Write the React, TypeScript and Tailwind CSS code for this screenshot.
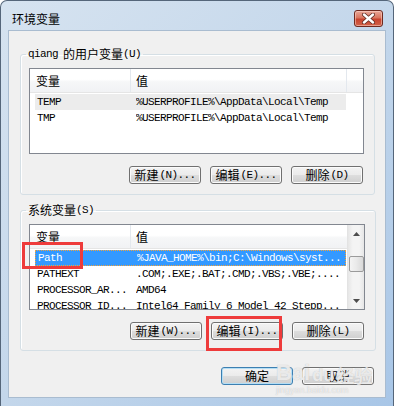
import React from 'react';

const mono = "font-['Liberation_Mono',monospace] text-[11px] tracking-[-0.6px]";

type Row = { name: string; value: string; state?: 'focus' | 'gray' };

function Button({ zh, hint, isDefault }: { zh: string; hint?: string; isDefault?: boolean }) {
  return (
    <div
      className={
        'w-[72px] h-[18px] rounded-[3px] border flex items-center justify-center leading-none bg-[linear-gradient(#f3f3f3_0%,#ebebeb_48%,#dddddd_52%,#cfcfcf_100%)] ' +
        (isDefault
          ? 'border-[#3c7fb1] shadow-[inset_0_0_0_1px_#b4def5]'
          : 'border-[#707070] shadow-[inset_0_0_0_1px_#fbfbfb]')
      }
    >
      <span className="text-[12px]">{zh}</span>
      {hint && <span className={mono + ' ml-[1px]'}>{hint}</span>}
    </div>
  );
}

function Header({ filler }: { filler: boolean }) {
  return (
    <div className="h-[24px] flex border-b border-[#e5e5e5] bg-[linear-gradient(#ffffff_0%,#ffffff_45%,#f6f7f8_55%,#f1f2f4_100%)]">
      <div className="w-[101px] border-r border-[#e3e8ee] pl-[6px] flex items-center text-[12px] leading-none">变量</div>
      <div className={'w-[216px] pl-[5px] flex items-center text-[12px] leading-none ' + (filler ? 'border-r border-[#e3e8ee]' : '')}>值</div>
      {filler && <div className="flex-1" />}
    </div>
  );
}

function Rows({ rows }: { rows: Row[] }) {
  return (
    <div className="mt-[1px] ml-[5px] w-[311px]">
      {rows.map((r) => (
        <div
          key={r.name}
          className={
            'h-[16px] flex items-center whitespace-nowrap ' +
            (r.state === 'focus'
              ? 'bg-[#3399ff] text-white border border-dotted border-[#f2a33a]'
              : r.state === 'gray'
                ? 'bg-[#ececec]'
                : '')
          }
        >
          <div className={mono + ' w-[101px] pl-[2px] overflow-hidden'}>{r.name}</div>
          <div className={mono + ' flex-1 overflow-hidden'}>{r.value}</div>
        </div>
      ))}
    </div>
  );
}

function ScrollBar() {
  return (
    <div className="w-[17px] h-full flex flex-col items-center bg-[linear-gradient(90deg,#e6e6e6,#f4f4f4_30%,#f4f4f4_70%,#e6e6e6)] border-l border-[#e3e3e3]">
      <div className="h-[17px] w-full flex items-center justify-center">
        <svg width="7" height="4" viewBox="0 0 7 4">
          <path d="M0 4 L3.5 0 L7 4 Z" fill="#4d4d4d" />
        </svg>
      </div>
      <div className="mt-[14px] w-[15px] h-[16px] rounded-[2px] border border-[#9b9b9b] bg-[linear-gradient(90deg,#f4f4f4,#e9e9e9_50%,#d9d9d9)]" />
      <div className="flex-1" />
      <div className="h-[17px] w-full flex items-center justify-center">
        <svg width="7" height="4" viewBox="0 0 7 4">
          <path d="M0 0 L3.5 4 L7 0 Z" fill="#4d4d4d" />
        </svg>
      </div>
    </div>
  );
}

function Group({ label, hint, children }: { label: string; hint: string; children: React.ReactNode }) {
  return (
    <fieldset className="mx-[11px] mr-[10px] border border-[#d5dfe5] rounded-[3px] shadow-[inset_1px_1px_0_#ffffff] pb-[10px]">
      <legend className="ml-[5px] px-[2px] h-[12px] leading-[12px] flex items-center">
        {label.startsWith('qiang') ? (
          <>
            <span className={mono}>qiang</span>
            <span className="text-[12px] ml-[5px]">的用户变量</span>
          </>
        ) : (
          <span className="text-[12px]">{label}</span>
        )}
        <span className={mono}>{hint}</span>
      </legend>
      {children}
    </fieldset>
  );
}

const userRows: Row[] = [
  { name: 'TEMP', value: '%USERPROFILE%\\AppData\\Local\\Temp', state: 'gray' },
  { name: 'TMP', value: '%USERPROFILE%\\AppData\\Local\\Temp' },
];

const sysRows: Row[] = [
  { name: 'Path', value: '%JAVA_HOME%\\bin;C:\\Windows\\syst...', state: 'focus' },
  { name: 'PATHEXT', value: '.COM;.EXE;.BAT;.CMD;.VBS;.VBE;....' },
  { name: 'PROCESSOR_AR...', value: 'AMD64' },
  { name: 'PROCESSOR_ID...', value: 'Intel64 Family 6 Model 42 Stepp...' },
];

export default function App() {
  return (
    <div className="w-[394px] h-[406px] bg-white relative overflow-hidden font-['Noto_Sans_CJK_SC','Microsoft_YaHei',sans-serif] text-black">
      <div className="h-full rounded-t-[7px] border border-b-0 border-[#55667a] bg-[linear-gradient(135deg,#d6e3f0_0%,#c4d7eb_50%,#a8c6e7_100%)] flex flex-col">
        <div className="h-[29px] flex justify-between shrink-0">
          <div className="ml-[11px] mt-[10px] text-[12px] leading-[16px]">环境变量</div>
          <div className="mr-[10px] mt-[9px] w-[29px] h-[17px] rounded-[3px] border border-[#6e2a20] bg-[linear-gradient(#e9a899_0%,#d9755f_45%,#c8432e_55%,#d2634a_100%)] shadow-[inset_0_0_0_1px_rgba(255,220,210,0.5)] flex items-center justify-center">
            <svg width="13" height="11" viewBox="0 0 13 11">
              <path d="M2 1.5 L11 9.5 M11 1.5 L2 9.5" stroke="#5e2a22" strokeWidth="4" strokeLinecap="round" />
              <path d="M2 1.5 L11 9.5 M11 1.5 L2 9.5" stroke="#ffffff" strokeWidth="2.4" strokeLinecap="round" />
            </svg>
          </div>
        </div>
        <div className="ml-[7px] w-[378px] h-[368px] bg-[#f0f0f0] border border-[#a9bcd0] shrink-0">
          <div className="h-[17px]" />
          <Group label="qiang" hint="(U)">
            <div className="mt-[8px] ml-[8px] mr-[10px] h-[86px] border border-[#828790] bg-white overflow-hidden">
              <Header filler />
              <Rows rows={userRows} />
            </div>
            <div className="mt-[12px] mr-[11px] flex justify-end gap-[9px]">
              <Button zh="新建" hint="(N)..." />
              <Button zh="编辑" hint="(E)..." />
              <Button zh="删除" hint="(D)" />
            </div>
          </Group>
          <div className="h-[9px]" />
          <Group label="系统变量" hint="(S)">
            <div className="mt-[8px] ml-[8px] mr-[10px] h-[86px] border border-[#828790] bg-white flex overflow-hidden">
              <div className="flex-1 overflow-hidden">
                <Header filler={false} />
                <Rows rows={sysRows} />
              </div>
              <ScrollBar />
            </div>
            <div className="mt-[12px] mr-[11px] flex justify-end gap-[9px]">
              <Button zh="新建" hint="(W)..." />
              <Button zh="编辑" hint="(I)..." />
              <Button zh="删除" hint="(L)" />
            </div>
          </Group>
          <div className="mt-[16px] mr-[11px] flex justify-end gap-[9px]">
            <Button zh="确定" isDefault />
            <Button zh="取消" />
          </div>
        </div>
      </div>

      {/* annotations */}
      <div className="absolute left-[22px] top-[242px] w-[61px] h-[27px] border-[3px] border-[#ee3b3b] pointer-events-none" />
      <div className="absolute left-[206px] top-[316px] w-[76px] h-[35px] border-[3px] border-[#ee3b3b] pointer-events-none" />

      {/* watermark */}
      <div className="absolute left-[276px] top-[362px] pointer-events-none select-none text-white/70 [text-shadow:0_0_1px_#b8b8b8] leading-none">
        <div className="flex items-end font-['Liberation_Sans',sans-serif] font-bold text-[22px]">
          <span>Bai</span>
          <span className="ml-[2px] text-[18px]">du</span>
          <span className="ml-[2px] text-[18px] font-['Noto_Sans_CJK_SC',sans-serif]">经验</span>
        </div>
        <div className="mt-[2px] text-[9px] font-['Liberation_Sans',sans-serif]">jingyan.baidu.com</div>
      </div>
    </div>
  );
}
